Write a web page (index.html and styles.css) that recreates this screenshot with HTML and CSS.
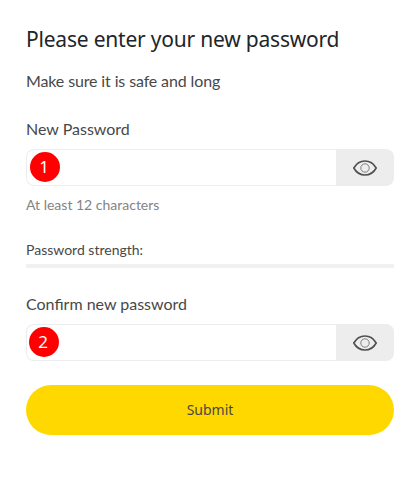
FILE: index.html
```html
<!DOCTYPE html>
<html lang="en">
<head>
  <meta charset="UTF-8" />
  <meta name="viewport" content="width=device-width, initial-scale=1.0" />
  <title>New password</title>
  <link rel="stylesheet" href="styles.css">
</head>
<body>
  <main>
    <h1>Please enter your new password</h1>
    <p class="intro">Make sure it is safe and long</p>

    <form>
      <label for="new-password">New Password</label>
      <div class="input-group">
        <input type="password" id="new-password">
        <button type="button" class="toggle" aria-label="Show password">
          <svg width="24" height="16" viewBox="0 0 24 16" fill="none">
            <path d="M.8 8C6-1.4 18-1.4 23.2 8 18 17.4 6 17.4.8 8Z" stroke="#505050" stroke-width="1.6" />
            <circle cx="12" cy="8" r="4.2" stroke="#808080" stroke-width="1" />
          </svg>
        </button>
        <span class="step step-one">1</span>
      </div>
      <p class="hint">At least 12 characters</p>

      <p class="strength">Password strength:</p>
      <div class="strength-bar"></div>

      <label for="confirm-password">Confirm new password</label>
      <div class="input-group">
        <input type="password" id="confirm-password">
        <button type="button" class="toggle" aria-label="Show password">
          <svg width="24" height="16" viewBox="0 0 24 16" fill="none">
            <path d="M.8 8C6-1.4 18-1.4 23.2 8 18 17.4 6 17.4.8 8Z" stroke="#505050" stroke-width="1.6" />
            <circle cx="12" cy="8" r="4.2" stroke="#808080" stroke-width="1" />
          </svg>
        </button>
        <span class="step step-two">2</span>
      </div>

      <button type="submit" class="submit">Submit</button>
    </form>
  </main>
</body>
</html>
```
FILE: styles.css
```css
* {
  box-sizing: border-box;
}

body {
  margin: 0;
  background: #fff;
  font-family: Lato, sans-serif;
  font-size: 16px;
  line-height: 24px;
  color: #484848;
}

main {
  padding: 24px 26px 0;
}

h1 {
  margin: 0 0 15px;
  font-family: "Noto Sans", sans-serif;
  font-size: 21px;
  font-weight: 400;
  line-height: 30px;
  letter-spacing: -0.21px;
  white-space: nowrap;
  color: #212529;
}

p {
  margin: 0;
}

.intro {
  margin-bottom: 24px;
  letter-spacing: -0.13px;
}

label {
  display: block;
  margin-bottom: 8px;
}

.input-group {
  position: relative;
  display: flex;
  height: 37px;
}

input {
  flex: 1;
  min-width: 0;
  padding: 0 12px;
  border: 1px solid #ededed;
  border-right: 0;
  border-radius: 8px 0 0 8px;
  background: #fff;
}

.toggle {
  display: flex;
  align-items: center;
  justify-content: center;
  width: 58px;
  padding: 0;
  border: 0;
  border-radius: 0 8px 8px 0;
  background: #ededed;
}

/* numbered marker on top of the input */
.step {
  position: absolute;
  top: 3px;
  width: 30px;
  height: 30px;
  padding-right: 2px;
  border-radius: 50%;
  background: #f00;
  color: #fff;
  font-family: "Noto Sans", sans-serif;
  font-size: 17px;
  line-height: 30px;
  text-align: center;
}

.step-one {
  left: 4px;
}

.step-two {
  left: 3px;
}

.hint {
  margin-top: 8px;
  font-size: 14px;
  line-height: 21px;
  color: #848484;
}

.strength {
  margin-top: 24px;
  font-size: 14px;
  line-height: 21px;
}

.strength-bar {
  height: 4px;
  margin: 4px 0 24px;
  background: #f1f1f1;
}

.submit {
  display: block;
  width: 100%;
  height: 50px;
  margin-top: 24px;
  padding: 0 0 2px;
  border: 0;
  border-radius: 25px;
  background: #ffd800;
  color: #484848;
  font-family: "Noto Sans", sans-serif;
  font-size: 14px;
}
```
